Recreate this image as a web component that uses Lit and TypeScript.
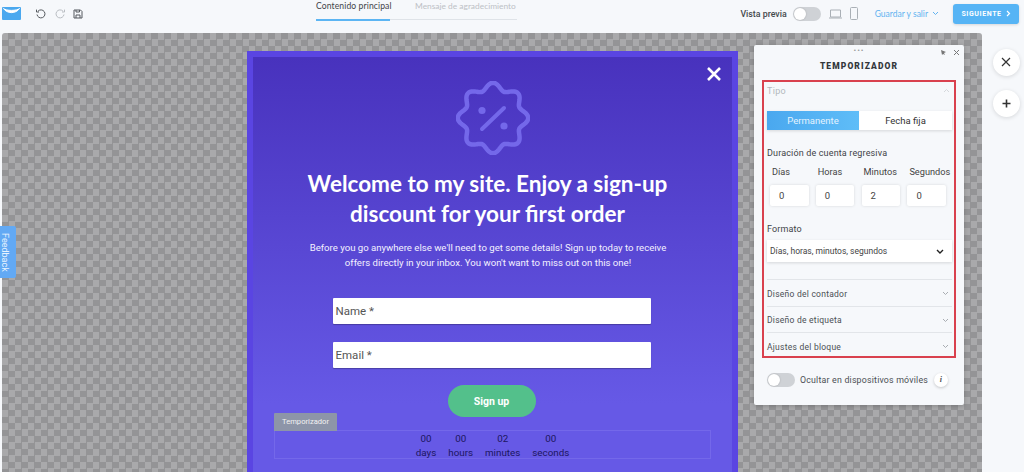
import { LitElement, html, css, svg } from "lit";
import { customElement } from "lit/decorators.js";

const chevron = (up = false) => html`<svg class="chev" width="7" height="5" viewBox="0 0 7 5"><path d=${up ? "M1 4L3.5 1.5L6 4" : "M1 1L3.5 3.5L6 1"} fill="none" stroke="currentColor" stroke-width="1"/></svg>`;

// Eight-lobed seal outline around the percent sign
const sealPath = (() => {
  const pts: string[] = [];
  for (let i = 0; i < 240; i++) {
    const t = (i / 240) * Math.PI * 2;
    const r = 31.8 + 3.4 * Math.cos(8 * t);
    const x = 37 + r * Math.sin(t);
    const y = 37 - r * Math.cos(t);
    pts.push(`${x.toFixed(2)},${y.toFixed(2)}`);
  }
  return "M" + pts.join("L") + "Z";
})();

@customElement("app-root")
export class AppRoot extends LitElement {
  static styles = css`
    :host { display: block; width: 1024px; height: 472px; overflow: hidden; background: #f6f8fb; font-family: Roboto, "Liberation Sans", sans-serif; position: relative; color: #333; }
    * { box-sizing: border-box; }
    .top { height: 33px; display: flex; align-items: center; padding-bottom: 6px; }
    .left { display: flex; align-items: center; padding-left: 2px; width: 316px; }
    .logo { margin-right: 14px; }
    .hist { margin-right: 7px; }
    .tabs { display: flex; width: 201px; align-self: flex-start; font-family: Lato, sans-serif; font-size: 8.6px; letter-spacing: .1px; }
    .tab { height: 20px; line-height: 12px; border-bottom: 1px solid #dfe3e8; white-space: nowrap; color: #bdc1c6; }
    .tab.on { width: 74px; flex: none; color: #3f4347; border-bottom-color: #5cb5f3; box-shadow: 0 1px 0 #5cb5f3; }
    .tab.off { flex: 1; min-width: 0; padding-left: 25px; font-size: 8.4px; letter-spacing: 0; }
    .right { margin-left: auto; display: flex; align-items: center; padding-right: 5px; }
    .prev { font-weight: 500; font-size: 8.8px; color: #44484c; margin-right: 6px; }
    .toggle { width: 28px; height: 14px; border-radius: 7px; background: #cfd2d6; position: relative; display: block; flex: none; }
    .toggle::after { content: ""; position: absolute; left: 1px; top: 1px; width: 12px; height: 12px; border-radius: 50%; background: #fff; box-shadow: 0 0 2px #0003; }
    .dev { margin-left: 7px; }
    .save { font-family: Lato, sans-serif; color: #62b3f0; font-size: 8.5px; margin: 0 14px 0 16px; display: flex; align-items: center; gap: 4px; }
    .save .chev { color: #62b3f0; }
    .next { width: 66px; height: 20px; border-radius: 3px; background: #56b4f5; color: #fff; font-size: 7px; font-weight: 700; letter-spacing: .6px; display: flex; align-items: center; justify-content: center; gap: 4px; box-shadow: 0 1px 3px #0002; }

    .main { display: flex; align-items: flex-start; padding-left: 2px; }
    .canvas { width: 980px; height: 439px; border-radius: 3px 3px 0 0; overflow: hidden; padding: 12px 0 0 245px; display: flex; align-items: flex-start; gap: 16px;
      background-color: #a9a9ab; background-image: conic-gradient(#949496 25%, transparent 0 50%, #949496 0 75%, transparent 0); background-size: 13px 13px; }
    .popup { margin-top: 6px; width: 491px; height: 440px; flex: none; border: 6px solid #5a45e2; border-bottom: 0; background: linear-gradient(#4832bd, #6659e6 80%); color: #fff; position: relative; display: flex; flex-direction: column; align-items: center; padding: 24px 0 0; }
    .popup-x { position: absolute; right: 10px; top: 9px; }
    .badge { display: block; }
    h1 { margin: 13.5px 0 0; padding-right: 10px; font-family: Lato, sans-serif; font-weight: 700; font-size: 22.5px; line-height: 30px; text-align: center; }
    .sub { margin: 11px 0 0; padding-right: 9px; font-size: 9.6px; line-height: 15px; text-align: center; color: #f3f1ff; }
    .field { margin: 28.5px 2px 0 0; width: 318px; height: 26px; background: #fff; border-radius: 1px; color: #555; font-size: 11.5px; line-height: 26px; padding-left: 3px; box-shadow: 0 1px 1px #0004; }
    .field + .field { margin-top: 18px; }
    .sign { margin: 17px 2px 0 0; width: 88px; height: 32px; border-radius: 16px; background: #53c08b; font-size: 10.5px; font-weight: 700; display: flex; align-items: center; justify-content: center; }
    .timer { position: relative; margin-top: 13px; width: 437px; height: 29px; border: 1px solid #7468ea; padding-top: 1px; display: flex; justify-content: center; gap: 12px; color: #1c1660; font-size: 9.8px; text-align: center; line-height: 14px; }
    .timer div { display: flex; flex-direction: column; }
    .tag { position: absolute; left: -1px; top: -18px; width: 63px; height: 18px; background: #8d95a8; color: #f2f2f2; font-size: 7.6px; line-height: 18px; text-align: center; border-radius: 1px 1px 0 0; }

    .panel { width: 210px; height: 360px; flex: none; background: #f6f8fb; border-radius: 2px; padding: 0 8px; display: flex; flex-direction: column; position: relative; box-shadow: 0 1px 4px #0003; font-size: 9px; color: #444; }
    .grip { height: 12px; text-align: center; color: #999; font-size: 8px; line-height: 12px; letter-spacing: 1px; }
    .ptools { position: absolute; top: 4px; right: 4px; display: flex; gap: 6px; }
    .ptitle { text-align: center; font-weight: 900; font-size: 8.5px; letter-spacing: 1.1px; color: #33373b; margin-top: 2px; height: 21px; line-height: 14px; }
    .box { border: 2px solid #d9414e; height: 278px; padding: 0 2px 0 3px; }
    .row-h { height: 17px; display: flex; justify-content: space-between; align-items: center; color: #b4b8bd; font-size: 9px; letter-spacing: .3px; padding-right: 2px; }
    .row-h .chev { color: #d5d8dc; }
    .seg { display: flex; margin-top: 12px; height: 19px; font-size: 9.5px; box-shadow: 0 1px 3px #0002; }
    .seg div { flex: 1; display: flex; align-items: center; justify-content: center; background: #fff; color: #333; }
    .seg .act { flex: none; width: 92px; background: linear-gradient(90deg, #4aa8ef, #5fbdf8); color: #e3f3fe; }
    .lab { margin-top: 17px; font-size: 9px; color: #3f4347; height: 12px; line-height: 12px; letter-spacing: .15px; }
    .cols { display: grid; grid-template-columns: repeat(4, 38.5px); column-gap: 7.3px; padding-left: 3px; }
    .labels { margin-top: 7px; font-size: 9.2px; color: #444; }
    .labels span { white-space: nowrap; line-height: 12px; padding-left: 2px; }
    .inp { margin-top: 6.5px; height: 21.5px; background: #fff; border-radius: 2px; padding-left: 9px; line-height: 21.5px; font-size: 9.5px; box-shadow: 0 0 3px #0002; }
    .sel { margin-top: 5px; height: 22px; background: #fff; display: flex; align-items: center; justify-content: space-between; padding: 0 8px 0 3px; font-size: 8.5px; box-shadow: 0 1px 3px #0002; color: #444; }
    .acc { height: 26.6px; padding-top: 2px; border-top: 1px solid #e2e5e9; display: flex; justify-content: space-between; align-items: center; font-size: 8.5px; padding-right: 3px; color: #4b4f54; letter-spacing: .25px; }
    .acc.first { margin-top: 17px; }
    .chev { color: #a9adb2; }
    .mob { display: flex; align-items: center; margin: 15px 0 0 5px; font-size: 8.8px; color: #4b4f54; letter-spacing: .2px; white-space: nowrap; }
    .mob .toggle { margin-right: 5px; }
    .info { width: 14px; height: 14px; margin-left: 6px; border-radius: 50%; background: #fff; box-shadow: 0 1px 3px #0003; font-family: "Liberation Serif", serif; font-style: italic; font-weight: 700; font-size: 8px; text-align: center; line-height: 14px; }

    .fabs { display: flex; flex-direction: column; gap: 14px; padding: 15.5px 0 0 10.5px; }
    .fab { width: 27px; height: 27px; border-radius: 50%; background: #fff; box-shadow: 0 1px 4px #0002; display: flex; align-items: center; justify-content: center; color: #333; }
    .feedback { position: absolute; left: 0; top: 226px; width: 16px; height: 52px; padding-right: 7px; background: #62a9f4; border-radius: 0 2px 2px 0; color: #e9f3fe; font-size: 9px; writing-mode: vertical-rl; text-align: center; line-height: 9px; }
  `;

  render() {
    return html`
      <div class="top">
        <div class="left">
          <svg class="logo" width="19" height="13" viewBox="0 0 19 13"><rect width="19" height="13" rx="1" fill="#4aa8ef"/><path d="M1.5 1.5C5 7 14 7 17.5 1.5C15 4 4 4 1.5 1.5Z" fill="#fff" stroke="#fff" stroke-width="1"/></svg>
          <svg class="hist" width="12" height="12" viewBox="0 0 12 12"><path d="M3 3.2A4 4 0 1 1 2 6.5M1.5 1.6V4H4" fill="none" stroke="#55595e" stroke-width="1"/></svg>
          <svg class="hist" width="12" height="12" viewBox="0 0 12 12"><path d="M9 3.2A4 4 0 1 0 10 6.5M10.5 1.6V4H8" fill="none" stroke="#b9bdc2" stroke-width="1"/></svg>
          <svg class="saveicon" width="10" height="10" viewBox="0 0 10 10"><path d="M1 1H7.5L9 2.5V9H1ZM3 1V3H6.5V1M3 9V6H7V9" fill="none" stroke="#55595e" stroke-width="1"/></svg>
        </div>
        <div class="tabs"><div class="tab on">Contenido principal</div><div class="tab off">Mensaje de agradecimiento</div></div>
        <div class="right">
          <span class="prev">Vista previa</span><span class="toggle"></span>
          <svg class="dev" width="15" height="10" viewBox="0 0 15 10"><path d="M2.5 1H12.5V8H2.5ZM1 9H14" fill="none" stroke="#aab0b6" stroke-width="1"/></svg>
          <svg class="dev" width="9" height="14" viewBox="0 0 9 14"><rect x=".5" y=".5" width="7" height="12" rx="1" fill="none" stroke="#aab0b6"/></svg>
          <span class="save">Guardar y salir ${chevron()}</span>
          <div class="next">SIGUIENTE <svg width="5" height="7" viewBox="0 0 5 7"><path d="M1 1L3.5 3.5L1 6" fill="none" stroke="#fff" stroke-width="1.2"/></svg></div>
        </div>
      </div>
      <div class="main">
        <div class="canvas">
          <section class="popup">
            <svg class="popup-x" width="16" height="16" viewBox="0 0 16 16"><path d="M2 2L14 14M14 2L2 14" stroke="#fff" stroke-width="2.6"/></svg>
            <svg class="badge" width="74" height="74" viewBox="0 0 74 74" fill="none" stroke="#7468ea" stroke-width="4.5" stroke-linecap="round">
              ${svg`<path d=${sealPath} stroke-linejoin="round"/><path d="M26 48L48 27" stroke-width="4"/><circle cx="26" cy="29.5" r="3.6" fill="#7468ea" stroke="none"/><circle cx="48" cy="45" r="3.6" fill="#7468ea" stroke="none"/>`}
            </svg>
            <h1>Welcome to my site. Enjoy a sign-up<br />discount for your first order</h1>
            <p class="sub">Before you go anywhere else we'll need to get some details! Sign up today to receive<br />offers directly in your inbox. You won't want to miss out on this one!</p>
            <div class="field">Name *</div>
            <div class="field">Email *</div>
            <div class="sign">Sign up</div>
            <div class="timer">
              <span class="tag">Temporizador</span>
              <div><span>00</span><span>days</span></div>
              <div><span>00</span><span>hours</span></div>
              <div><span>02</span><span>minutes</span></div>
              <div><span>00</span><span>seconds</span></div>
            </div>
          </section>
          <aside class="panel">
            <div class="grip">•••</div>
            <div class="ptools">
              <svg width="7" height="7" viewBox="0 0 7 7"><path d="M1 1L6 3L4 4L5 6L3 5L2 6Z" fill="#777"/></svg>
              <svg width="7" height="7" viewBox="0 0 7 7"><path d="M1 1L6 6M6 1L1 6" stroke="#777"/></svg>
            </div>
            <div class="ptitle">TEMPORIZADOR</div>
            <div class="box">
              <div class="row-h"><span>Tipo</span>${chevron(true)}</div>
              <div class="seg"><div class="act">Permanente</div><div>Fecha fija</div></div>
              <div class="lab">Duración de cuenta regresiva</div>
              <div class="cols labels">
                <span>Días</span><span>Horas</span><span>Minutos</span><span>Segundos</span>
              </div>
              <div class="cols">
                <div class="inp">0</div><div class="inp">0</div><div class="inp">2</div><div class="inp">0</div>
              </div>
              <div class="lab">Formato</div>
              <div class="sel">Días, horas, minutos, segundos <svg width="8" height="5" viewBox="0 0 8 5"><path d="M1 1L4 4L7 1" fill="none" stroke="#222" stroke-width="1.4"/></svg></div>
              <div class="acc first">Diseño del contador ${chevron()}</div>
              <div class="acc">Diseño de etiqueta ${chevron()}</div>
              <div class="acc">Ajustes del bloque ${chevron()}</div>
            </div>
            <div class="mob"><span class="toggle"></span>Ocultar en dispositivos móviles<span class="info">i</span></div>
          </aside>
        </div>
        <div class="fabs">
          <div class="fab"><svg width="10" height="10" viewBox="0 0 10 10"><path d="M1 1L9 9M9 1L1 9" stroke="#333" stroke-width="1.2"/></svg></div>
          <div class="fab"><svg width="9" height="9" viewBox="0 0 9 9"><path d="M4.5 .5V8.5M.5 4.5H8.5" stroke="#333" stroke-width="1.6"/></svg></div>
        </div>
      </div>
      <div class="feedback">Feedback</div>
    `;
  }
}
